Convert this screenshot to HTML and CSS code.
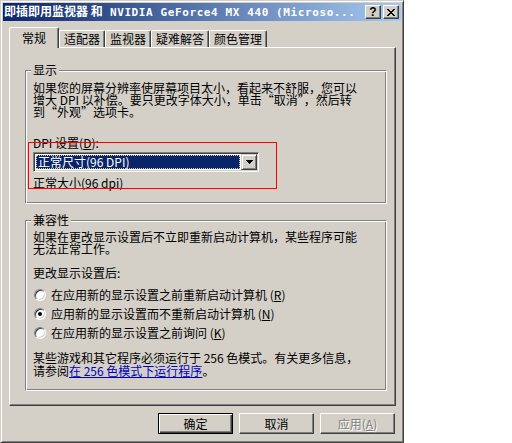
FILE: index.html
```html
<!DOCTYPE html>
<html lang="zh-CN">
<head>
  <meta charset="UTF-8">
  <title>即插即用监视器 和 NVIDIA GeForce4 MX 440 属性</title>
  <link rel="stylesheet" href="styles.css">
</head>
<body>
  <div class="window">
    <div class="titlebar">
      <span class="title">即插即用监视器 和<span class="title-latin"> NVIDIA GeForce4 MX 440 (Microso...</span></span>
      <span class="caption-btn help">?</span>
      <span class="caption-btn close">
        <svg width="8" height="7" viewBox="0 0 8 7"><path d="M0 0h2v1H0zM6 0h2v1H6zM1 1h2v1H1zM5 1h2v1H5zM2 2h4v1H2zM3 3h2v1H3zM2 4h4v1H2zM1 5h2v1H1zM5 5h2v1H5zM0 6h2v1H0zM6 6h2v1H6z" fill="#000"/></svg>
      </span>
    </div>

    <div class="tabs">
      <div class="tab active">常规</div>
      <div class="tab">适配器</div>
      <div class="tab">监视器</div>
      <div class="tab">疑难解答</div>
      <div class="tab">颜色管理</div>
    </div>

    <div class="panel">
      <fieldset class="group">
        <legend>显示</legend>
        <p class="text intro">如果您的屏幕分辨率使屏幕项目太小，看起来不舒服，您可以<br>增大 DPI 以补偿。要只更改字体大小，单击“取消”，然后转<br>到“外观”选项卡。</p>
        <div class="dpi-label">DPI 设置(<u>D</u>):</div>
        <div class="combo">
          <div class="combo-value">正常尺寸(96 DPI)</div>
          <div class="combo-btn">
            <svg width="7" height="4" viewBox="0 0 7 4"><path d="M0 0h7v1H0zM1 1h5v1H1zM2 2h3v1H2zM3 3h1v1H3z" fill="#000"/></svg>
          </div>
        </div>
        <div class="dpi-note">正常大小(96 dpi)</div>
      </fieldset>

      <fieldset class="group compat">
        <legend>兼容性</legend>
        <p class="text">如果在更改显示设置后不立即重新启动计算机，某些程序可能<br>无法正常工作。</p>
        <div class="after-label">更改显示设置后:</div>
        <div class="options">
          <div class="option"><span class="radio"></span><span>在应用新的显示设置之前重新启动计算机 (<u>R</u>)</span></div>
          <div class="option"><span class="radio checked"></span><span>应用新的显示设置而不重新启动计算机 (<u>N</u>)</span></div>
          <div class="option"><span class="radio"></span><span>在应用新的显示设置之前询问 (<u>K</u>)</span></div>
        </div>
        <p class="text note">某些游戏和其它程序必须运行于 256 色模式。有关更多信息，<br>请参阅<a href="#" class="link">在 256 色模式下运行程序</a>。</p>
      </fieldset>
    </div>

    <div class="buttons">
      <button class="btn default">确定</button>
      <button class="btn">取消</button>
      <button class="btn disabled">应用(<u>A</u>)</button>
    </div>

    <div class="highlight"></div>
  </div>
</body>
</html>
```

FILE: styles.css
```css
body {
  margin: 0;
  background: #fff;
  font-family: "Noto Sans CJK SC", sans-serif;
  font-size: 12px;
  color: #000;
}

.window {
  position: relative;
  width: 404px;
  height: 443px;
  box-sizing: border-box;
  padding: 2px;
  background: #d4d0c8;
  border: 1px solid;
  border-color: #d4d0c8 #404040 #404040 #d4d0c8;
  box-shadow: inset 1px 1px #fff, inset -1px -1px #808080;
}

/* title bar */
.titlebar {
  display: flex;
  align-items: center;
  height: 18px;
  padding-left: 1px;
  padding-right: 2px;
  background: linear-gradient(to right, #0a246a, #a6caf0);
}

.title {
  flex: 1;
  color: #fff;
  font-weight: bold;
  line-height: 18px;
  white-space: nowrap;
  overflow: hidden;
}

.title-latin {
  font-family: "DejaVu Sans Mono", monospace;
  font-size: 11px;
  letter-spacing: 0.6px;
}

.caption-btn {
  display: flex;
  align-items: center;
  justify-content: center;
  width: 16px;
  height: 14px;
  box-sizing: border-box;
  background: #d4d0c8;
  border: 1px solid;
  border-color: #fff #404040 #404040 #fff;
  box-shadow: inset -1px -1px #808080;
}

.caption-btn.help {
  margin-right: 2px;
  font-family: "Liberation Sans", sans-serif;
  font-weight: bold;
  font-size: 12px;
  line-height: 12px;
}

/* tabs */
.tabs {
  display: flex;
  align-items: flex-end;
  height: 21px;
  margin: 6px 0 -1px 6px;
}

.tab {
  position: relative;
  height: 17px;
  box-sizing: border-box;
  margin-bottom: 1px;
  padding: 0 4px;
  line-height: 16px;
  border-top: 1px solid #fff;
  border-left: 1px solid #fff;
  border-right: 1px solid #404040;
  border-radius: 2px 2px 0 0;
  box-shadow: inset -1px 0 #808080;
  background: #d4d0c8;
}

.tab.active {
  z-index: 1;
  height: 21px;
  margin-bottom: 0;
  padding: 2px 12px 0;
}

/* panel */
.panel {
  width: 387px;
  height: 359px;
  box-sizing: border-box;
  margin-left: 6px;
  padding: 16px 6px 0 15px;
  border: 1px solid;
  border-color: #fff #404040 #404040 #fff;
  box-shadow: inset -1px -1px #808080;
}

.group {
  width: 362px;
  box-sizing: border-box;
  min-width: 0;
  margin: 0;
  padding: 5px 8px 14px 7px;
  border: 1px solid;
  border-color: #808080 #fff #fff #808080;
  box-shadow: inset 1px 1px #fff, inset -1px -1px #808080;
}

.group legend {
  margin-left: -2px;
  padding: 0 2px;
  line-height: 12px;
  background: #d4d0c8;
}

.group.compat {
  margin-top: 10px;
  padding-bottom: 13px;
}

.text {
  margin: 0;
  line-height: 12px;
  white-space: nowrap;
}

.intro {
  margin-top: 1px;
}

.dpi-label {
  margin-top: 19px;
  line-height: 12px;
}

.combo {
  display: flex;
  width: 226px;
  height: 20px;
  box-sizing: border-box;
  margin-top: 3px;
  background: #fff;
  border: 1px solid;
  border-color: #808080 #fff #fff #808080;
  box-shadow: inset 1px 1px #404040, inset -1px -1px #d4d0c8;
  padding: 1px;
}

.combo-value {
  flex: 1;
  margin: 1px;
  padding-left: 1px;
  line-height: 12px;
  color: #fff;
  background: #0a246a;
  border: 1px dotted #d8d49a;
}

.combo-btn {
  display: flex;
  align-items: center;
  justify-content: center;
  width: 16px;
  height: 16px;
  box-sizing: border-box;
  background: #d4d0c8;
  border: 1px solid;
  border-color: #d4d0c8 #404040 #404040 #d4d0c8;
  box-shadow: inset 1px 1px #fff, inset -1px -1px #808080;
}

.dpi-note {
  margin-top: 5px;
  line-height: 12px;
}

.after-label {
  margin-top: 12px;
  line-height: 12px;
}

.options {
  display: flex;
  flex-direction: column;
  gap: 7px;
  margin-top: 10px;
}

.option {
  display: flex;
  align-items: center;
  gap: 5px;
  height: 12px;
  padding-left: 1px;
  line-height: 12px;
  white-space: nowrap;
}

.radio {
  position: relative;
  width: 12px;
  height: 12px;
  box-sizing: border-box;
  border-radius: 50%;
  border: 1px solid;
  border-color: #808080 #fff #fff #808080;
  box-shadow: inset 1px 1px #404040, inset -1px -1px #d4d0c8;
  background: #fff;
}

.radio.checked::after {
  content: "";
  position: absolute;
  left: 3px;
  top: 3px;
  width: 4px;
  height: 4px;
  border-radius: 50%;
  background: #000;
}

.note {
  margin-top: 12px;
  line-height: 13px;
}

.link {
  color: #0000c0;
}

/* dialog buttons */
.buttons {
  display: flex;
  justify-content: flex-end;
  gap: 6px;
  margin-top: 7px;
  padding-right: 6px;
}

.btn {
  width: 75px;
  height: 21px;
  box-sizing: border-box;
  padding: 0;
  font-family: inherit;
  font-size: 12px;
  line-height: 12px;
  color: #000;
  background: #d4d0c8;
  border: 1px solid;
  border-color: #fff #404040 #404040 #fff;
  box-shadow: inset -1px -1px #808080;
}

.btn.default {
  border-color: #000;
  box-shadow: inset 1px 1px #fff, inset -1px -1px #404040, inset -2px -2px #808080;
}

.btn.disabled {
  color: #808080;
  text-shadow: 1px 1px #fff;
}

/* red annotation frame */
.highlight {
  position: absolute;
  left: 27px;
  top: 141px;
  width: 249px;
  height: 47px;
  box-sizing: border-box;
  border: 1px solid #f00;
}
```
